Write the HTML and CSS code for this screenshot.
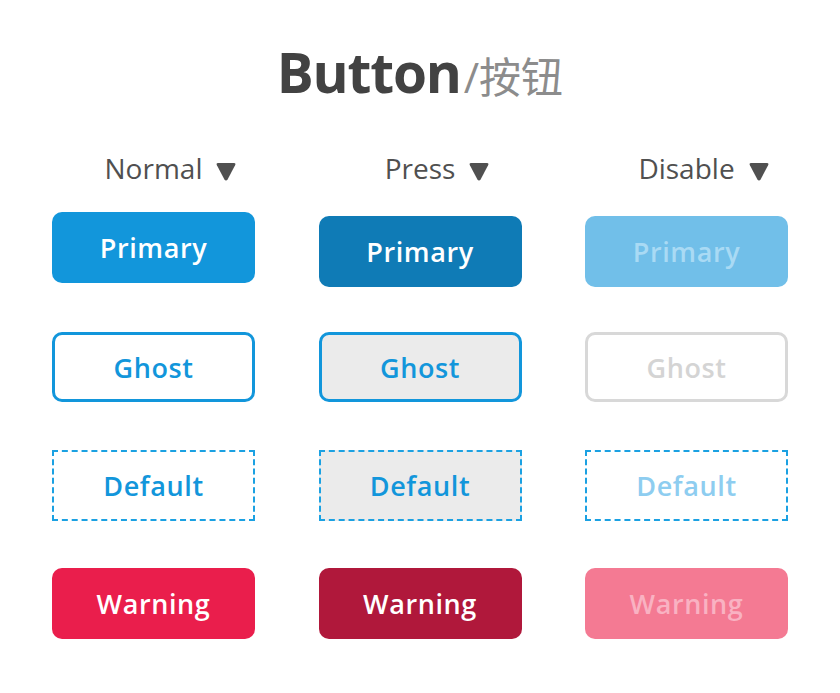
FILE: index.html
```html
<!DOCTYPE html>
<html lang="zh">
<head>
<meta charset="utf-8">
<title>Button</title>
<link rel="stylesheet" href="styles.css">
</head>
<body>
<div class="page">
  <h1 class="title"><span class="title-en">Button</span><span class="title-cn">/按钮</span></h1>
  <div class="grid">
    <div class="col">
      <div class="head"><span class="head-text">Normal<svg class="tri" viewBox="0 0 20 19"><path d="M2.2 1 H17.8 Q20.2 1 19.1 3.2 L11.7 17.2 Q10 20 8.3 17.2 L0.9 3.2 Q-0.2 1 2.2 1 Z"/></svg></span></div>
      <div class="btn primary normal lift">Primary</div>
      <div class="btn ghost normal">Ghost</div>
      <div class="btn dflt normal">Default</div>
      <div class="btn warning normal">Warning</div>
    </div>
    <div class="col">
      <div class="head"><span class="head-text">Press<svg class="tri" viewBox="0 0 20 19"><path d="M2.2 1 H17.8 Q20.2 1 19.1 3.2 L11.7 17.2 Q10 20 8.3 17.2 L0.9 3.2 Q-0.2 1 2.2 1 Z"/></svg></span></div>
      <div class="btn primary press">Primary</div>
      <div class="btn ghost press">Ghost</div>
      <div class="btn dflt press">Default</div>
      <div class="btn warning press">Warning</div>
    </div>
    <div class="col">
      <div class="head"><span class="head-text">Disable<svg class="tri" viewBox="0 0 20 19"><path d="M2.2 1 H17.8 Q20.2 1 19.1 3.2 L11.7 17.2 Q10 20 8.3 17.2 L0.9 3.2 Q-0.2 1 2.2 1 Z"/></svg></span></div>
      <div class="btn primary disable">Primary</div>
      <div class="btn ghost disable">Ghost</div>
      <div class="btn dflt disable">Default</div>
      <div class="btn warning disable">Warning</div>
    </div>
  </div>
</div>
</body>
</html>
```

FILE: styles.css
```css
* { box-sizing: border-box; }
html, body { margin: 0; padding: 0; background: #ffffff; }
body { font-family: "Open Sans", "Noto Sans CJK SC", sans-serif; width: 840px; height: 693px; overflow: hidden; }
.page { padding-top: 34px; }
.title { margin: 0; text-align: center; line-height: 76px; height: 76px; font-weight: 700; }
.title-en { font-size: 55px; color: #424242; letter-spacing: -1.2px; }
.title-cn { font-size: 42px; color: #8c8c8c; font-weight: 400; margin-left: 3px; }
.grid { display: grid; grid-template-columns: 203px 203px 203px; column-gap: 63.5px; padding: 0 52px; margin-top: 39px; }
.col { display: flex; flex-direction: column; }
.head { height: 38px; text-align: center; font-size: 28px; color: #505050; line-height: 38px; margin-bottom: 29px; }
.head-text { position: relative; }
.tri { position: absolute; left: calc(100% + 14px); top: 13px; width: 20px; height: 19px; fill: #505050; }
.btn { height: 71px; border-radius: 10px; display: flex; align-items: center; justify-content: center; font-size: 27px; font-weight: 600; letter-spacing: 0.6px; margin-bottom: 47px; }
.primary { margin-bottom: 45px; }
.lift { margin-top: -4px; margin-bottom: 49px; }
.primary.normal { background: #1296db; color: #ffffff; }
.primary.press { background: #0f7bb6; color: #ffffff; }
.primary.disable { background: #71bfe9; color: #a9daf4; }
.ghost { height: 70px; margin-bottom: 48px; border: 3px solid #1296db; color: #1296db; }
.ghost.normal { background: #ffffff; }
.ghost.press { background: #ebebeb; }
.ghost.disable { border-color: #d8d8d8; color: #d4d4d4; background: #ffffff; }
.dflt { border: 2px dashed #1ba1e2; border-radius: 0; color: #1296db; }
.dflt.press { background: #ebebeb; }
.dflt.disable { color: #8ecdf0; }
.warning.normal { background: #ea1e4c; color: #ffffff; }
.warning.press { background: #b0183b; color: #ffffff; }
.warning.disable { background: #f47a93; color: #f9b2c2; }
```
